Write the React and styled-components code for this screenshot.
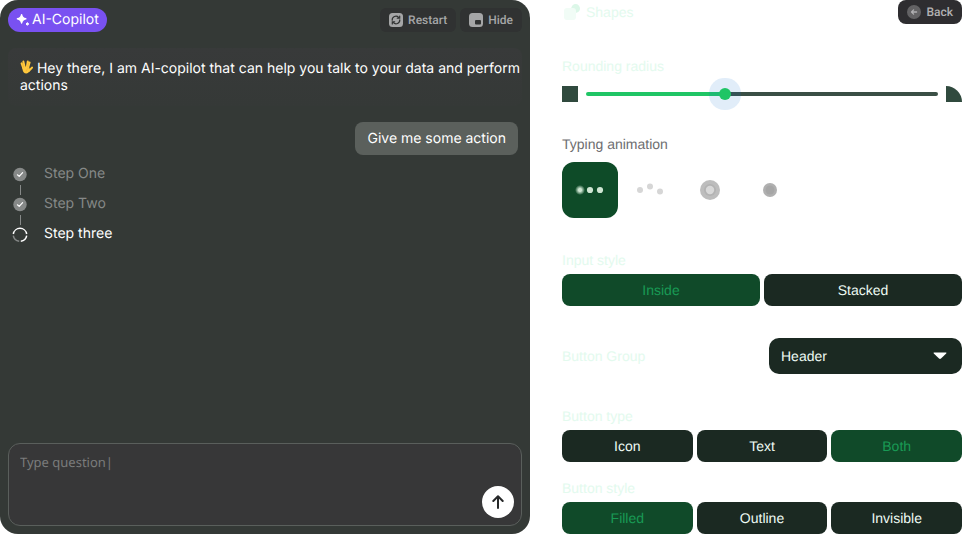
import { useState } from "react";
import styled, { createGlobalStyle, css } from "styled-components";

const buttonGroups = ["Header", "Message", "Footer"];

export default function App() {
  const [radius, setRadius] = useState(39);
  const [typing, setTyping] = useState("fade");
  const [inputStyle, setInputStyle] = useState("Inside");
  const [buttonType, setButtonType] = useState("Both");
  const [buttonStyle, setButtonStyle] = useState("Filled");

  return (
    <>
      <GlobalStyle />
      <Page>
        <ChatPanel />
        <Settings>
          <SettingsHeader>
            <SettingsTitle>
              <ShapesIcon />
              Shapes
            </SettingsTitle>
            <BackButton type="button">
              <BackIcon />
              Back
            </BackButton>
          </SettingsHeader>

          <Field $gap={10}>
            <Label htmlFor="radius">Rounding radius</Label>
            <SliderRow>
              <Corner />
              <Slider
                id="radius"
                type="range"
                min="0"
                max="100"
                value={radius}
                onChange={(event) => setRadius(Number(event.target.value))}
                style={{ "--fill": `${radius}%` }}
              />
              <Corner $round />
            </SliderRow>
          </Field>

          <Field as="fieldset" $gap={8}>
            <Label as="legend" $muted>
              Typing animation
            </Label>
            <Tiles>
              {Object.keys(typingIcons).map((name) => (
                <Tile key={name} $active={typing === name}>
                  <input
                    type="radio"
                    name="typing"
                    aria-label={name}
                    checked={typing === name}
                    onChange={() => setTyping(name)}
                  />
                  {typingIcons[name]}
                </Tile>
              ))}
            </Tiles>
          </Field>

          <Segmented
            label="Input style"
            options={["Inside", "Stacked"]}
            value={inputStyle}
            onChange={setInputStyle}
          />

          <InlineField>
            <Label htmlFor="group">Button Group</Label>
            <SelectBox>
              <Select id="group" defaultValue="Header">
                {buttonGroups.map((group) => (
                  <option key={group}>{group}</option>
                ))}
              </Select>
              <Caret viewBox="0 0 14 8" aria-hidden="true">
                <path d="M1.2 0.5h11.6c.6 0 .8.6.4 1L8 6.6c-.6.5-1.4.5-2 0L.8 1.5c-.4-.4-.2-1 .4-1z" />
              </Caret>
            </SelectBox>
          </InlineField>

          <FieldPair>
            <Segmented
              label="Button type"
              options={["Icon", "Text", "Both"]}
              value={buttonType}
              onChange={setButtonType}
            />
            <Segmented
              label="Button style"
              options={["Filled", "Outline", "Invisible"]}
              value={buttonStyle}
              onChange={setButtonStyle}
            />
          </FieldPair>
        </Settings>
      </Page>
    </>
  );
}

function ChatPanel() {
  return (
    <Chat>
      <ChatHeader>
        <Brand>
          <SparkleIcon />
          AI-Copilot
        </Brand>
        <HeaderActions>
          <ChipButton type="button">
            <RestartIcon />
            Restart
          </ChipButton>
          <ChipButton type="button">
            <HideIcon />
            Hide
          </ChipButton>
        </HeaderActions>
      </ChatHeader>

      <BotMessage>
        <HandIcon /> Hey there, I am AI-copilot that can help you talk to your
        data and perform actions
      </BotMessage>
      <UserMessage>Give me some action</UserMessage>

      <Steps>
        <Step>
          <CheckIcon />
          Step One
        </Step>
        <Step>
          <CheckIcon />
          Step Two
        </Step>
        <Step $current>
          <ProgressIcon />
          Step three
        </Step>
      </Steps>

      <Composer>
        <Question aria-label="Question" placeholder="Type question|" />
        <SendButton type="button" aria-label="Send">
          <svg width="12" height="14" viewBox="0 0 12 14">
            <path
              d="M6 13V1.5M1.3 6L6 1.3L10.7 6"
              fill="none"
              stroke="#262829"
              strokeWidth="2"
              strokeLinecap="round"
              strokeLinejoin="round"
            />
          </svg>
        </SendButton>
      </Composer>
    </Chat>
  );
}

function Segmented({ label, options, value, onChange }) {
  return (
    <Field role="group" aria-label={label} $gap={4}>
      <Label as="span">{label}</Label>
      <Segments>
        {options.map((option) => (
          <Segment
            key={option}
            type="button"
            aria-pressed={option === value}
            $active={option === value}
            onClick={() => onChange(option)}
          >
            {option}
          </Segment>
        ))}
      </Segments>
    </Field>
  );
}

function SparkleIcon() {
  return (
    <svg width="14" height="14" viewBox="0 0 14 14" fill="#fff">
      <path d="M5.6 1.6C6.1 4.5 7 5.3 9.8 5.8C7 6.3 6.1 7.1 5.6 10C5.1 7.1 4.2 6.3 1.4 5.8C4.2 5.3 5.1 4.5 5.6 1.6Z" stroke="#fff" strokeWidth="1.4" strokeLinejoin="round" />
      <path d="M11.4 9.6L12.7 11L11.4 12.3L10 11Z" stroke="#fff" strokeWidth="1" strokeLinejoin="round" />
    </svg>
  );
}

function RestartIcon() {
  return (
    <svg width="14" height="14" viewBox="0 0 14 14">
      <rect width="14" height="14" rx="3.5" fill="#a5a6a7" />
      <g fill="none" stroke="#303232" strokeWidth="1.2" strokeLinecap="round">
        <path d="M3.2 7.2A3.7 3.7 0 0 1 9.6 4.4M10.8 6.8A3.7 3.7 0 0 1 4.4 9.6" />
        <path d="M10.7 3V5.2H8.3M3.3 11V8.8H5.7" />
      </g>
    </svg>
  );
}

function HideIcon() {
  return (
    <svg width="14" height="14" viewBox="0 0 14 14">
      <rect width="14" height="14" rx="3.5" fill="#a5a6a7" />
      <rect x="6" y="7" width="6" height="4.5" rx="1" fill="#303232" />
    </svg>
  );
}

function BackIcon() {
  return (
    <svg width="14" height="14" viewBox="0 0 14 14">
      <circle cx="7" cy="7" r="7" fill="#636264" />
      <path
        d="M9.6 7H4.8M6.6 4.9L4.5 7L6.6 9.1"
        fill="none"
        stroke="#b1b0b2"
        strokeWidth="1.3"
        strokeLinecap="round"
        strokeLinejoin="round"
      />
    </svg>
  );
}

function ShapesIcon() {
  return (
    <svg width="18" height="18" viewBox="0 0 18 18">
      <circle cx="13.6" cy="5.5" r="4.4" fill="#dcf7e8" />
      <rect x="2" y="5" width="12" height="12" rx="3" fill="#f1fcf6" />
    </svg>
  );
}

function HandIcon() {
  return (
    <Hand viewBox="0 0 13 15" role="img" aria-label="Vulcan salute">
      <g fill="none" stroke="#ffc83d" strokeWidth="2" strokeLinecap="round">
        <path d="M3.2 8L1.6 3.4M4.7 7.5L3.4 1.6" />
        <path d="M6.8 7.5L7.8 1.4M8 8L9.6 2.4" />
        <path d="M8.8 11L12 7.6" />
      </g>
      <path
        d="M2.2 6.8L8.8 6.6L9.8 9C9.8 11 9.2 11.8 8.2 12.8C7.2 13.8 4.8 13.8 3.8 12.6C2.8 11.2 2.4 9.6 2.2 6.8Z"
        fill="#ffc83d"
      />
      <path
        d="M2.7 3.6L3.6 7M8.5 3.4L7.7 7M8.4 8.4C7 8.8 6.4 9.6 6.4 11"
        fill="none"
        stroke="#e2a02c"
        strokeWidth=".4"
        strokeLinecap="round"
      />
    </Hand>
  );
}

function CheckIcon() {
  return (
    <svg width="16" height="16" viewBox="0 0 16 16">
      <circle cx="8" cy="8.5" r="6.7" fill="#868988" />
      <path
        d="M5.4 8.8L7.2 10.4L10.6 6.7"
        fill="none"
        stroke="#fff"
        strokeWidth="1.2"
        strokeLinecap="round"
        strokeLinejoin="round"
      />
    </svg>
  );
}

function ProgressIcon() {
  return (
    <svg width="16" height="16" viewBox="0 0 16 16" fill="none" strokeWidth="1.5">
      <path d="M1.3 8A6.8 6.8 0 0 1 14.7 8" stroke="#fff" />
      <path d="M14.7 9.6A6.8 6.8 0 0 1 8.8 15.2" stroke="#fff" />
      <path d="M7.2 15.2A6.8 6.8 0 0 1 1.3 9.6" stroke="#868988" />
    </svg>
  );
}

const typingIcons = {
  fade: (
    <svg width="32" height="32" viewBox="0 0 32 32" fill="#cfe6d3">
      <defs>
        <radialGradient id="soft-dot">
          <stop offset="0.3" stopColor="#cfe6d3" />
          <stop offset="1" stopColor="#cfe6d3" stopOpacity="0" />
        </radialGradient>
      </defs>
      <circle cx="6" cy="16" r="5" fill="url(#soft-dot)" />
      <circle cx="16" cy="16" r="3.1" />
      <circle cx="26" cy="16" r="3.1" />
    </svg>
  ),
  wave: (
    <svg width="32" height="32" viewBox="0 0 32 32" fill="#d6d6d6">
      <circle cx="6" cy="16" r="3" />
      <circle cx="16" cy="12.5" r="3" />
      <circle cx="26" cy="17.5" r="3" />
    </svg>
  ),
  ripple: (
    <svg width="32" height="32" viewBox="0 0 32 32">
      <circle cx="16" cy="16" r="10" fill="#bdbdbd" />
      <circle cx="16" cy="16" r="6" fill="#b3b3b3" />
      <circle cx="16" cy="16" r="4.2" fill="#d8d8d8" />
    </svg>
  ),
  pulse: (
    <svg width="32" height="32" viewBox="0 0 32 32">
      <circle cx="16" cy="16" r="7" fill="#b0b0b0" />
      <circle cx="16" cy="16" r="4.5" fill="#a6a6a6" />
    </svg>
  ),
};

const GlobalStyle = createGlobalStyle`
  *,
  *::before,
  *::after {
    box-sizing: border-box;
  }

  body {
    margin: 0;
    background: #fff;
    font-family: "Liberation Sans", Arial, sans-serif;
    font-size: 14px;
    line-height: 20px;
    text-rendering: geometricPrecision;
  }

  button,
  select,
  textarea {
    font: inherit;
    text-rendering: inherit;
  }

  svg {
    flex: none;
  }
`;

const Page = styled.main`
  display: grid;
  grid-template-columns: minmax(0, 53fr) minmax(0, 44fr);
  min-height: 100vh;
`;

const Chat = styled.section`
  display: flex;
  flex-direction: column;
  padding: 8px;
  border-radius: 18px;
  background: #343936;
  color: #fff;
  font-family: Inter, "Liberation Sans", sans-serif;
`;

const ChatHeader = styled.header`
  display: flex;
  align-items: center;
  justify-content: space-between;
  margin-bottom: 16px;
`;

const Brand = styled.h1`
  display: flex;
  align-items: center;
  gap: 2px;
  height: 24px;
  margin: 0;
  padding: 0 8px;
  border-radius: 12px;
  background: #7951f1;
  font-size: 14px;
  font-weight: 400;
`;

const HeaderActions = styled.div`
  display: flex;
  gap: 4px;
`;

const ChipButton = styled.button`
  display: flex;
  align-items: center;
  gap: 5px;
  height: 24px;
  padding: 0 9px;
  border: 0;
  border-radius: 6px;
  background: #303232;
  color: #a5a6a7;
  font-family: Roboto, sans-serif;
  font-size: 12px;
  font-weight: 500;
`;

const BackButton = styled(ChipButton)`
  border-radius: 8px;
  background: #2e2d30;
  color: #b1b0b2;
`;

const BotMessage = styled.p`
  margin: 0 0 16px;
  padding: 12px 0 12px 12px;
  border-radius: 8px;
  background: linear-gradient(#383a3a, #353937);
  line-height: 17px;
`;

const Hand = styled.svg`
  width: 13px;
  height: 15px;
  vertical-align: -2px;
`;

const UserMessage = styled.p`
  align-self: flex-end;
  margin: 0 4px 10px 0;
  padding: 8px 12px;
  border-radius: 8px;
  background: #5b605c;
  line-height: 17px;
`;

const Steps = styled.ol`
  display: flex;
  flex-direction: column;
  gap: 12px;
  margin: 0;
  padding: 0 4px;
  list-style: none;
`;

const Step = styled.li`
  position: relative;
  display: flex;
  align-items: center;
  gap: 16px;
  height: 18px;
  color: ${({ $current }) => ($current ? "#fff" : "#868988")};

  &:not(:first-child)::before {
    content: "";
    position: absolute;
    top: -10px;
    left: 8px;
    width: 1px;
    height: 10px;
    background: #868988;
  }
`;

const Composer = styled.form`
  display: flex;
  align-items: flex-end;
  gap: 8px;
  min-height: 83px;
  margin-top: auto;
  padding: 8px 7px 7px 11px;
  border: 1px solid #5a5f5c;
  border-radius: 12px;
  background: #373738;
`;

const Question = styled.textarea`
  flex: 1;
  align-self: stretch;
  padding: 0;
  border: 0;
  outline: 0;
  resize: none;
  background: none;
  color: #fff;
  font-family: "Noto Sans", sans-serif;
  font-size: 13px;

  &::placeholder {
    color: #7b7c7c;
  }
`;

const SendButton = styled.button`
  display: grid;
  place-items: center;
  width: 32px;
  height: 32px;
  padding: 0;
  border: 0;
  border-radius: 50%;
  background: #fff;
`;

const Settings = styled.section`
  display: flex;
  flex-direction: column;
  gap: 32px;
  padding: 0 8px 0 32px;
`;

const SettingsHeader = styled.header`
  display: flex;
  align-items: center;
  justify-content: space-between;
`;

const SettingsTitle = styled.h2`
  display: flex;
  align-items: center;
  gap: 6px;
  margin: 0;
  color: #e3faee;
  font-size: 14px;
  font-weight: 400;
`;

const Field = styled.div`
  display: flex;
  flex-direction: column;
  gap: ${({ $gap }) => $gap}px;
  min-width: 0;
  margin: 0;
  padding: 0;
  border: 0;

  & > legend {
    margin-bottom: ${({ $gap }) => $gap}px;
  }
`;

const FieldPair = styled.div`
  display: flex;
  flex-direction: column;
  gap: 16px;
`;

const InlineField = styled.div`
  display: flex;
  align-items: center;
  justify-content: space-between;
`;

const Label = styled.label`
  padding: 0;
  color: ${({ $muted }) => ($muted ? "#6d6d70" : "#e3faee")};
`;

const SliderRow = styled.div`
  display: flex;
  align-items: center;
  gap: 8px;
`;

const Corner = styled.span`
  flex: none;
  width: 16px;
  height: 16px;
  border-top-right-radius: ${({ $round }) => ($round ? "100%" : "0")};
  background: #304a3e;
`;

const thumb = css`
  width: 12px;
  height: 12px;
  border: 0;
  border-radius: 50%;
  background: #1fc565;
  box-shadow: 0 0 0 10px rgba(25, 118, 210, 0.13);
`;

const Slider = styled.input`
  flex: 1;
  min-width: 0;
  height: 4px;
  margin: 0;
  border-radius: 2px;
  appearance: none;
  background: linear-gradient(
    to right,
    #1fc565 var(--fill),
    #3a4f45 var(--fill)
  );

  &::-webkit-slider-thumb {
    appearance: none;
    ${thumb}
  }

  &::-moz-range-thumb {
    ${thumb}
  }
`;

const Tiles = styled.div`
  display: flex;
  gap: 4px;
`;

const Tile = styled.label`
  position: relative;
  display: grid;
  place-items: center;
  width: 56px;
  height: 56px;
  border-radius: 12px;
  background: ${({ $active }) => ($active ? "#0e4b28" : "transparent")};

  input {
    position: absolute;
    inset: 0;
    width: 100%;
    height: 100%;
    margin: 0;
    opacity: 0;
  }
`;

const Segments = styled.div`
  display: flex;
  gap: 4px;
`;

const Segment = styled.button`
  flex: 1 1 0;
  height: 32px;
  padding: 0;
  border: 0;
  border-radius: 8px;
  background: ${({ $active }) => ($active ? "#104a29" : "#1b2922")};
  color: ${({ $active }) => ($active ? "#199a55" : "#eefbf4")};
`;

const SelectBox = styled.div`
  position: relative;
  width: 193px;
`;

const Select = styled.select`
  width: 100%;
  height: 36px;
  padding: 0 40px 0 12px;
  border: 0;
  border-radius: 10px;
  appearance: none;
  background: #1b2922;
  color: #eefbf4;
`;

const Caret = styled.svg`
  position: absolute;
  top: 14px;
  right: 15px;
  width: 14px;
  height: 8px;
  fill: #fff;
  pointer-events: none;
`;
